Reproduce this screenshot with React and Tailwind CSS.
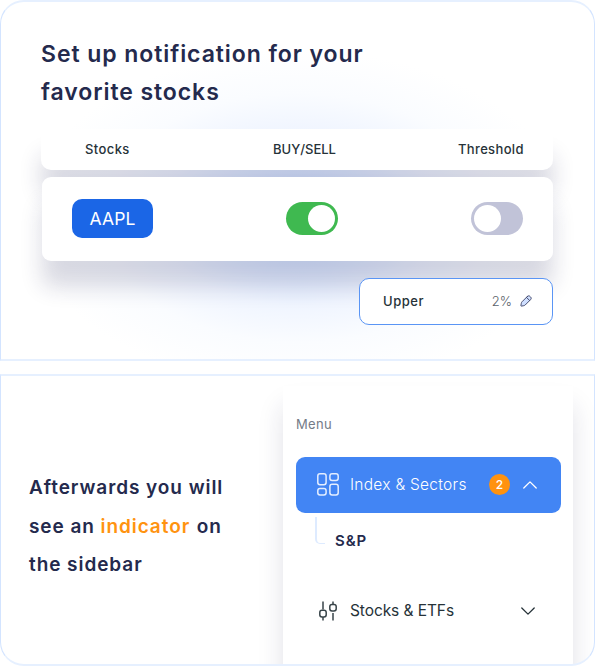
function Toggle({ on }) {
  return (
    <span className={on ? "flex h-[33px] w-[52px] items-center justify-end rounded-full bg-[#3fb950] px-[3px]" : "flex h-[33px] w-[52px] items-center justify-start rounded-full bg-[#c1c3d8] px-[3px]"}>
      <span className="h-[27px] w-[27px] rounded-full bg-white" />
    </span>
  );
}

function Pencil() {
  return (
    <svg className="ml-[8px] h-3 w-3" viewBox="0 0 12 12" fill="#cfdfff" stroke="#3a4064" strokeWidth="0.9" strokeLinejoin="round" strokeLinecap="round">
      <path d="M7.3 1.500 2 6.800c-.4.4-.6.900-.7 1.500L.9 10.500c-.1.500.1.700.6.600l2.200-.4c.6-.1 1.100-.3 1.500-.7l5.300-5.300c.9-.9 1-1.800 0-2.800l-.4-.4c-1-1-1.900-.9-2.800 0Z" />
      <path d="M6.600 2.500 9.500 5.400" fill="none" />
    </svg>
  );
}

function GridIcon() {
  return (
    <svg className="h-[23px] w-[22px]" viewBox="0 0 22 23" fill="none" stroke="#e4eeff" strokeWidth="1.5">
      <rect x="0.8" y="0.8" width="8.300" height="11" rx="2.200" />
      <rect x="12.900" y="0.8" width="8.300" height="6.600" rx="2.200" />
      <rect x="0.8" y="15.600" width="8.300" height="6.400" rx="2.200" />
      <rect x="12.900" y="11.200" width="8.300" height="10.800" rx="2.200" />
    </svg>
  );
}

function CandleIcon() {
  return (
    <svg className="h-[20px] w-[18px]" viewBox="0 0 18 20" fill="none" stroke="#384449" strokeWidth="1.500">
      <path d="M4 .5v8M4 16v3.500M14 .5v3M14 12v7.500" />
      <rect x="0.800" y="9.300" width="6.400" height="6.600" rx="2.200" />
      <rect x="10.800" y="3.400" width="6.400" height="6.600" rx="2.200" />
    </svg>
  );
}

function Chevron({ up }) {
  return (
    <svg className="h-[8px] w-[14px]" viewBox="0 0 14 8" fill="none" stroke={up ? "#fff" : "#263238"} strokeWidth="1.300" strokeLinecap="round" strokeLinejoin="round">
      <path d={up ? "M.8 7 7 .9 13.200 7" : "M.8 1 7 7.100 13.200 1"} />
    </svg>
  );
}

export default function App() {
  return (
    <main className="flex h-[666px] w-[595px] flex-col gap-[13px] overflow-hidden bg-white font-['Inter',sans-serif] text-[#263238]">
      <section className="h-[361px] shrink-0 overflow-hidden rounded-t-[24px] border border-y-2 border-x-[#d3e4ff] border-y-[#e6f0ff] bg-[radial-gradient(ellipse_270px_168px_at_297px_216px,#cbdeff_0%,#dae7ff_25%,#f0f5ff_52%,#fafcff_74%,#ffffff_100%)] pl-[40px] pr-[41px]">
        <h1 className="mt-[33px] whitespace-nowrap text-[23px] font-semibold leading-[38px] tracking-[0.93px] text-[#242a4d]">
          Set up notification for your<br />favorite stocks
        </h1>
        <div className="mt-[18px] flex h-[41px] w-[512px] items-center rounded-b-[10px] rounded-t-[4px] bg-white pt-px text-[13px] font-medium shadow-[0_26px_22px_rgba(28,30,80,0.165)]">
          <span className="ml-[44px] w-[188px] tracking-[0.4px]">Stocks</span>
          <span className="w-[185px] tracking-normal">BUY/SELL</span>
          <span className="tracking-[0.35px]">Threshold</span>
        </div>
        <div className="relative ml-px mt-[6.500px] flex h-[84.500px] w-[511px] items-center rounded-[9px] bg-white pl-[30px] pr-[30px] shadow-[0_26px_22px_rgba(28,30,80,0.165)]">
          <span className="flex h-[39px] w-[81px] items-center justify-center rounded-[10px] bg-[#1b66e6] text-[17.500px] tracking-[0.15px] text-white">AAPL</span>
          <span className="ml-[133px]"><Toggle on /></span>
          <span className="ml-[133px]"><Toggle /></span>
        </div>
        <div className="relative ml-auto mt-[16.500px] flex h-[47px] w-[194px] items-center rounded-[10px] border border-[#5a95f5] bg-white pl-[23px] pr-5">
          <span className="pt-px text-[13px] font-medium tracking-[0.55px]">Upper</span>
          <span className="ml-auto pt-px text-[13px] font-light text-[#59626b]">2%</span>
          <Pencil />
        </div>
      </section>

      <section className="flex h-[292px] shrink-0 overflow-hidden rounded-b-[24px] border border-y-2 border-x-[#d3e4ff] border-y-[#e6f0ff]">
        <h2 className="ml-[28px] mt-[93px] w-[254px] whitespace-nowrap text-[19px] font-semibold leading-[38.500px] tracking-[0.93px] text-[#242a4d]">
          Afterwards you will<br />see an <span className="text-[#ff9310]">indicator</span><span className="ml-px"> on</span><br />the sidebar
        </h2>
        <aside className="mt-[10px] h-[300px] w-[290px] shrink-0 bg-white px-[13px] pt-[28px] shadow-[0_20px_24px_rgba(28,30,80,0.13)]">
          <p className="h-[20px] text-[13px] leading-[20px] tracking-[0.35px] text-[#747b87]">Menu</p>
          <div className="mt-[22.500px] flex h-[56px] w-[265px] items-center rounded-[9px] bg-[#4285f4] pl-[21px] text-white">
            <GridIcon />
            <span className="ml-[11px] w-[139px] whitespace-nowrap text-[15.500px] font-light tracking-[0.28px]">Index &amp; Sectors</span>
            <span className="flex h-[21px] w-[21px] items-center justify-center rounded-full bg-[#ff920f] text-[12px] font-medium">2</span>
            <span className="ml-[13px]"><Chevron up /></span>
          </div>
          <div className="ml-[19px] mt-[4.500px] flex h-[48px] items-start">
            <span className="h-[27px] w-[10px] rounded-bl-[5px] border-b border-l-2 border-[#deebff]" />
            <span className="ml-[10px] mt-[12px] text-[15px] font-semibold leading-[24px] tracking-[0.9px] text-[#242a4d]">S&amp;P</span>
          </div>
          <div className="flex h-[92px] items-center pl-[23px]">
            <CandleIcon />
            <span className="ml-[13px] w-[171px] whitespace-nowrap text-[15.500px] tracking-[-0.08px]">Stocks &amp; ETFs</span>
            <Chevron />
          </div>
        </aside>
      </section>
    </main>
  );
}
